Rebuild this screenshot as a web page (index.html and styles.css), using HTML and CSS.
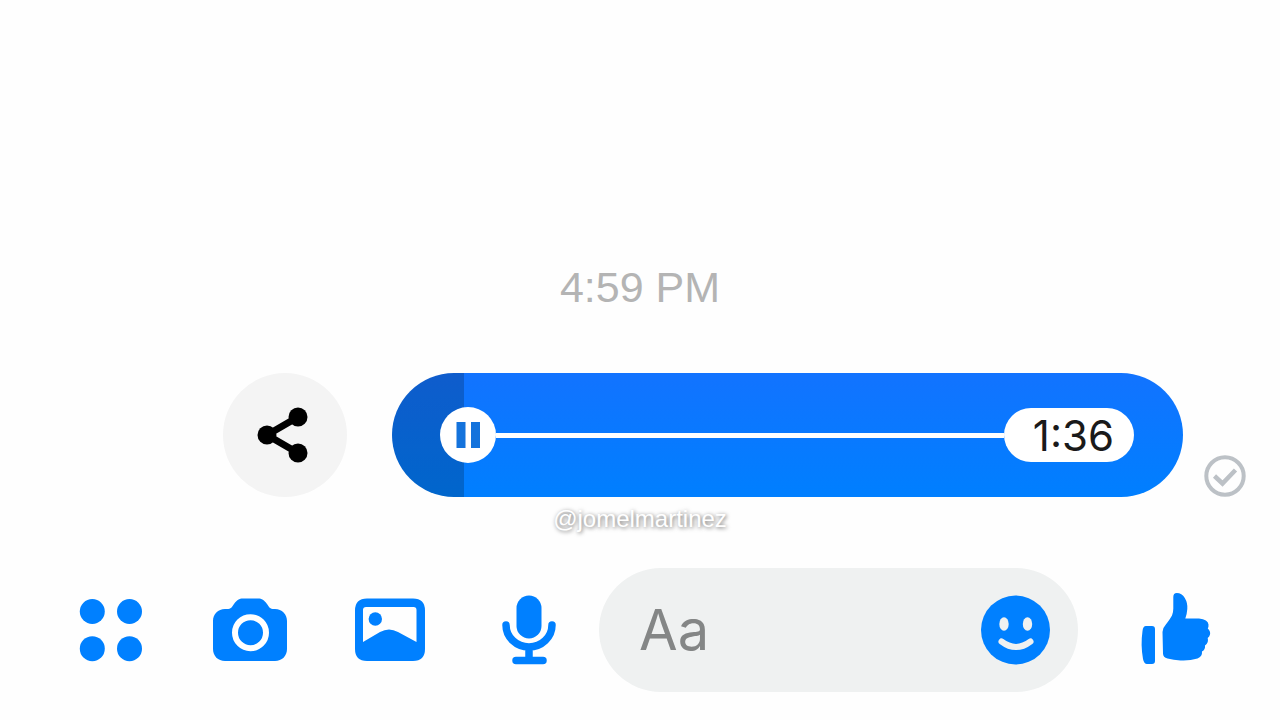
FILE: index.html
```html
<!DOCTYPE html>
<html lang="en">
<head>
    <meta charset="UTF-8">
    <title>Chat</title>
    <link rel="stylesheet" href="styles.css">
</head>
<body>
<div id="chat">
    <div class="time">4:59 PM</div>

    <!-- voice message -->
    <div class="message">
        <button class="share" type="button" aria-label="Share">
            <svg width="124" height="124" viewBox="0 0 124 124">
                <path d="M75 44L44 62l31 18" fill="none" stroke="#000" stroke-width="7" stroke-linejoin="round"/>
                <circle cx="44" cy="62" r="9.5"/>
                <circle cx="75" cy="44" r="9.5"/>
                <circle cx="75" cy="80" r="9.5"/>
            </svg>
        </button>
        <div class="voice">
            <button class="pause" type="button" aria-label="Pause">
                <svg width="56" height="56" viewBox="0 0 56 56">
                    <path d="M16.5 15h9v26h-9zM31 15h9v26h-9z" fill="#1473dc"/>
                </svg>
            </button>
            <div class="line"></div>
            <span class="duration">1:36</span>
        </div>
        <svg class="sent" width="42" height="42" viewBox="0 0 42 42">
            <g fill="none" stroke="#bcc1c6">
                <circle cx="21" cy="21" r="18.7" stroke-width="4"/>
                <path d="M10.5 21l8 7.500 13-13.500" stroke-width="4.5"/>
            </g>
        </svg>
    </div>
    <div class="mark">@jomelmartinez</div>

    <!-- toolbar -->
    <form class="composer">
        <div class="tools">
            <button class="icon" type="button" aria-label="More">
                <svg viewBox="0 0 76 76">
                    <circle cx="19.3" cy="19.5" r="12.5"/>
                    <circle cx="56.5" cy="19.5" r="12.5"/>
                    <circle cx="19.3" cy="56.7" r="12.5"/>
                    <circle cx="56.5" cy="56.7" r="12.5"/>
                </svg>
            </button>
            <button class="icon" type="button" aria-label="Camera">
                <svg viewBox="0 0 76 76">
                    <path d="M13 17h2c4 0 5-2 7-5 3-4 5-5.500 9-5.500h15c4 0 6 1.500 9 5.500 2 3 3 5 7 5h1c7 0 12 5 12 12v28c0 7-5 12-12 12H13C6 69 1 64 1 57V29c0-7 5-12 12-12z"/>
                    <circle cx="38.5" cy="40.700" r="15.500" fill="none" stroke="#fff" stroke-width="6"/>
                </svg>
            </button>
            <button class="icon" type="button" aria-label="Photos">
                <svg viewBox="0 0 76 76">
                    <path fill-rule="evenodd" d="M16 6.500h46q12 0 12 12V57q0 12-12 12H16Q4 69 4 57V18.500q0-12 12-12zM15 15q-3 0-3 3v32l17-10q9-5 18 0l18.500 10V18q0-3-3-3z"/>
                    <circle cx="24.300" cy="27" r="6.700"/>
                </svg>
            </button>
            <button class="icon" type="button" aria-label="Record">
                <svg viewBox="0 0 76 76">
                    <rect x="26.500" y="3.500" width="25" height="43" rx="12.500"/>
                    <path d="M16 33a23 22 0 0 0 46 0M39 57v11M26 68.500h27" fill="none" stroke="#0080ff" stroke-width="7.500" stroke-linecap="round"/>
                </svg>
            </button>
        </div>
        <div class="field">
            <input type="text" placeholder="Aa" aria-label="Message">
            <button class="smile" type="button" aria-label="Emoji">
                <svg viewBox="0 0 70 70">
                    <circle cx="35.500" cy="35" r="34.500"/>
                    <ellipse cx="24" cy="29" rx="4.700" ry="6.700" fill="#eff1f1"/>
                    <ellipse cx="47.500" cy="29" rx="4.700" ry="6.700" fill="#eff1f1"/>
                    <path d="M21.500 46.500q14.500 11 29 0" fill="none" stroke="#eff1f1" stroke-width="6" stroke-linecap="round"/>
                </svg>
            </button>
        </div>
        <button class="icon like" type="button" aria-label="Like">
            <svg viewBox="0 0 76 76">
                <path d="M8 34h6q3 0 3 3v32q0 3-3 3H9q-3 0-4-5-2.500-14-.5-28 .5-5 3.500-5z"/>
                <path d="M24.500 40q0-4 3-7 4-5 6.500-9.500 1.300-3 1.300-7V5q0-4 3.500-4 5 0 8 5 3 5 2.500 11-.3 5-2 9.500H61q9 1 9.500 6 .2 2-.7 4 3 3 2.200 6-.5 2-2.300 3.500 1.300 5-2.700 7.500.5 4-3 6 .5 5-4.500 7-8 2.500-17 2-7-.3-13-2-4.500-1.200-4.500-5z"/>
            </svg>
        </button>
    </form>
</div>
</body>
</html>
```
FILE: styles.css
```css
*{
    margin: 0;
    padding: 0;
    box-sizing: border-box;
}
body{
    background: #fefefe;
    font-family: Inter, "Liberation Sans", sans-serif;
}
button{
    border: none;
    background: none;
    cursor: pointer;
}
svg{
    display: block;
    fill: #0080ff;
}
#chat{
    min-height: 100vh;
    display: flex;
    flex-direction: column;
    justify-content: flex-end;
    padding-bottom: 28px;
}
.time{
    text-align: center;
    font-family: "Liberation Sans", Arial, sans-serif;
    font-size: 43px;
    line-height: 52px;
    color: #b4b4b4;
    margin-bottom: 60px;
}

/* voice message */
.message{
    display: flex;
    align-items: flex-end;
    padding: 0 34px 0 223px;
}
.share{
    width: 124px;
    height: 124px;
    border-radius: 50%;
    background: #f4f4f4;
    margin-right: 45px;
}
.share svg{
    fill: #000;
}
.voice{
    flex: 1;
    height: 124px;
    display: flex;
    align-items: center;
    padding: 0 49px 0 48px;
    border-radius: 62px;
    background: linear-gradient(to right, rgba(0, 0, 0, .2) 72px, transparent 72px), linear-gradient(#1273ff, #007fff);
}
.pause{
    width: 56px;
    height: 56px;
    border-radius: 50%;
    background: #fff;
}
.line{
    flex: 1;
    height: 5px;
    background: #fff;
}
.duration{
    width: 130px;
    height: 54px;
    border-radius: 27px;
    padding-right: 20px;
    background: #fff;
    color: #1a1a1a;
    font-size: 42px;
    line-height: 56px;
    text-align: right;
}
.sent{
    margin-left: 21px;
}
.mark{
    text-align: center;
    font-family: "Liberation Sans", Arial, sans-serif;
    font-size: 24px;
    line-height: 28px;
    margin: 8px 0 35px;
    color: #fff;
    text-shadow: 1px 1px 4px rgba(0, 0, 0, .6);
}

/* toolbar */
.composer{
    display: flex;
    align-items: center;
    padding: 0 66px 0 73px;
}
.tools{
    display: flex;
    gap: 63px;
}
.icon{
    width: 76px;
    height: 76px;
}
.field{
    flex: 1;
    min-width: 0;
    height: 124px;
    display: flex;
    align-items: center;
    margin: 0 60px 0 33px;
    padding: 0 28px 0 40px;
    border-radius: 62px;
    background: #eff1f1;
}
.field input{
    flex: 1;
    min-width: 0;
    border: none;
    outline: none;
    background: none;
    font: inherit;
    font-size: 56px;
    color: #111;
}
.field input::placeholder{
    color: #848686;
}
.smile{
    width: 70px;
    height: 70px;
}
```
